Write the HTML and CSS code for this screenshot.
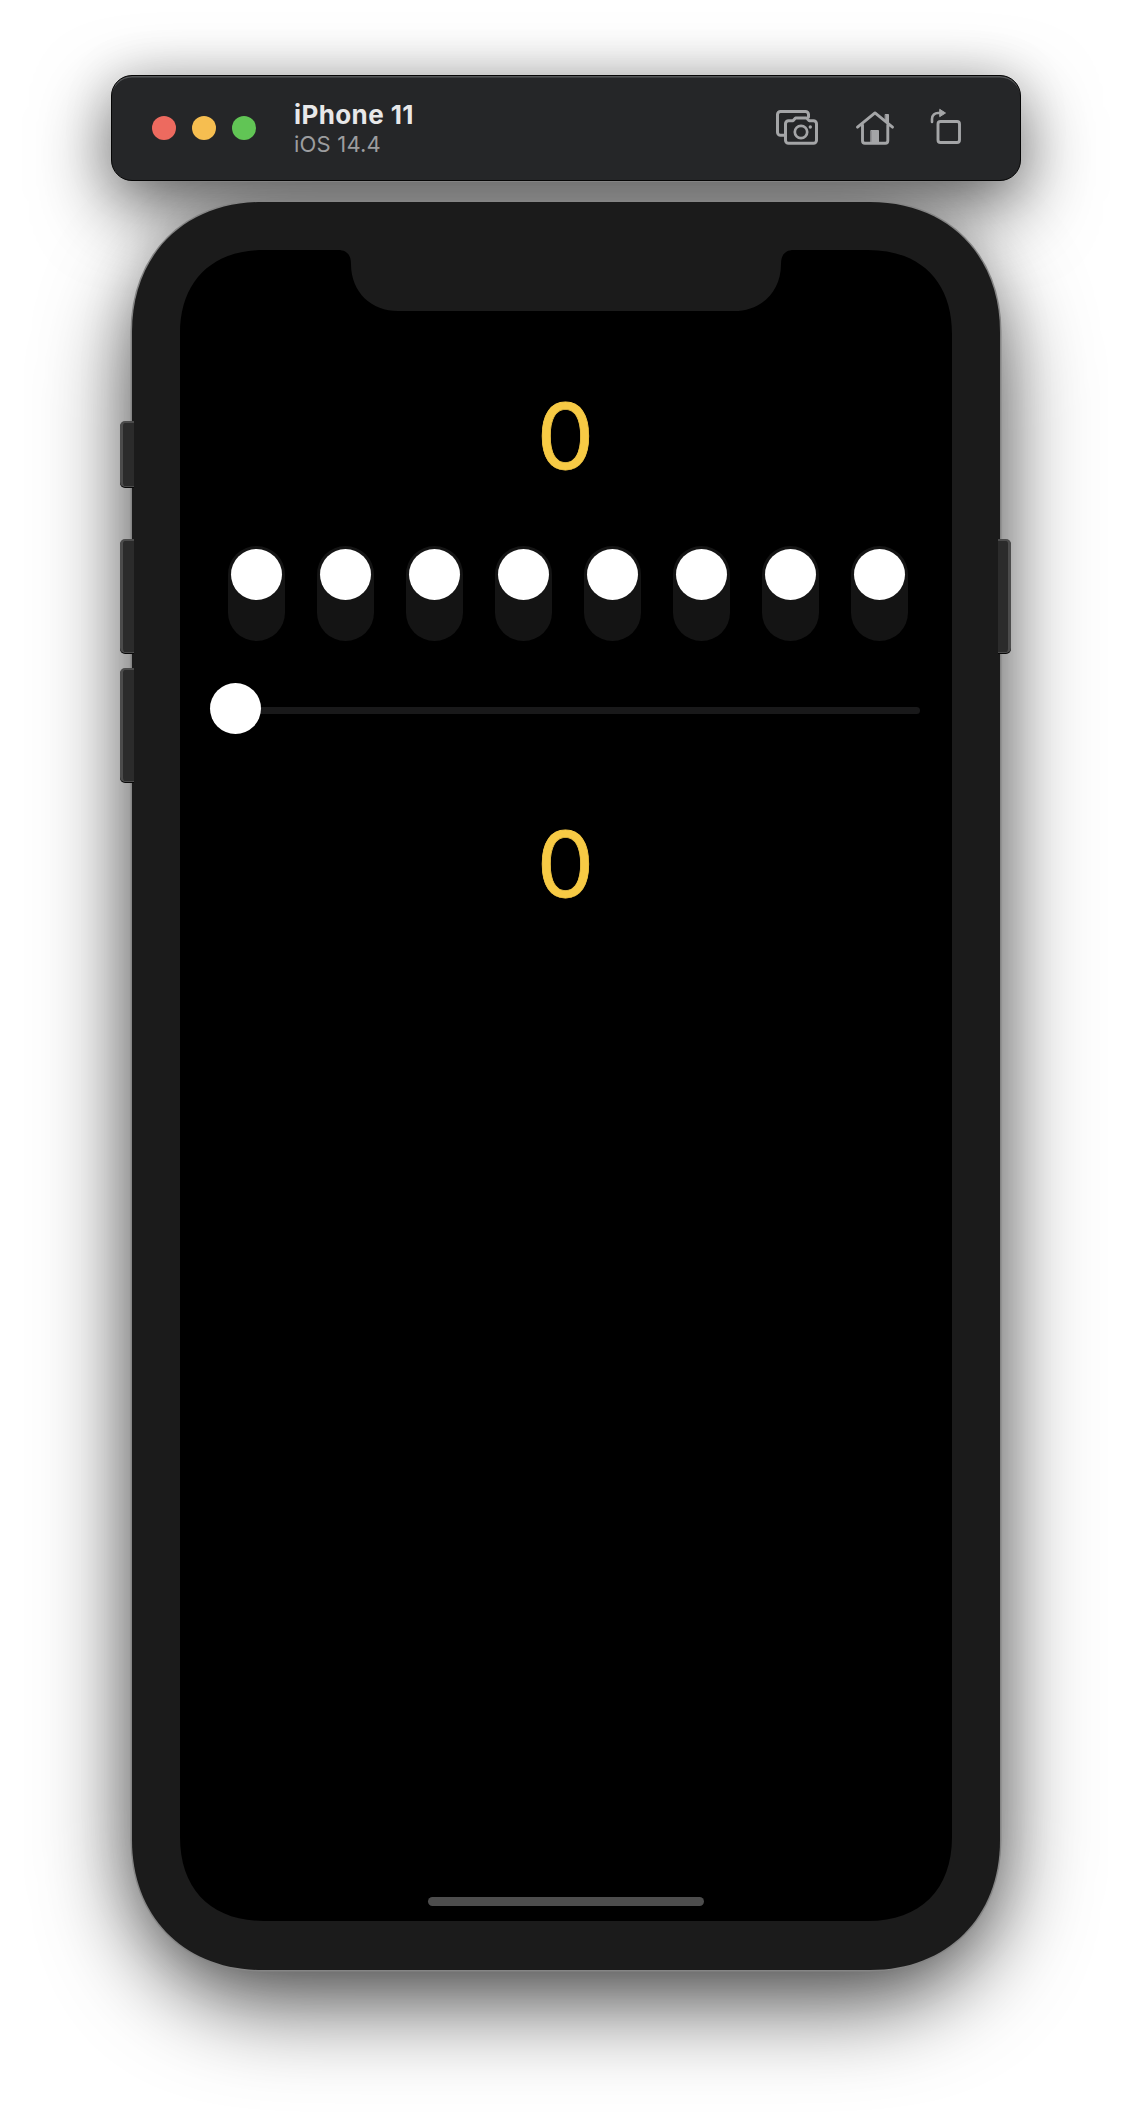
FILE: index.html
```
<!DOCTYPE html>
<html lang="en">
<head>
<meta charset="utf-8">
<title>iPhone 11</title>
<link rel="stylesheet" href="styles.css">
</head>
<body>
<header class="titlebar">
  <div class="lights"><i class="light red"></i><i class="light yellow"></i><i class="light green"></i></div>
  <div class="title"><h1>iPhone 11</h1><p>iOS 14.4</p></div>
  <svg class="tools" width="190" height="40" viewBox="0 0 190 40" fill="none" stroke="#a4a5a7" stroke-width="3" stroke-linejoin="round" stroke-linecap="round">
    <path d="M13 27.200H9.500a3 3 0 0 1-3-3V6.500a3 3 0 0 1 3-3h25a3 3 0 0 1 3 3V9"/>
    <path d="M14.500 15.700a3 3 0 0 1 3-3h4.500L24.500 10h11l2.700 2.700h4.300a3 3 0 0 1 3 3v16.500a3 3 0 0 1-3 3h-25a3 3 0 0 1-3-3z"/>
    <circle cx="30" cy="24" r="6.200" stroke-width="2.700"/><circle cx="39.300" cy="19" r="1.700" fill="#a4a5a7" stroke="none"/>
    <path d="M86.500 19.200L104 4.900l17.500 14.300M91.500 17v15.700a2.500 2.500 0 0 0 2.500 2.500h20.300a2.500 2.500 0 0 0 2.500-2.500V17" stroke-width="2.900"/>
    <path d="M114.500 6.500h3v9l-3-2.500zM100.200 22.500h7.300v13h-7.300z" fill="#a4a5a7" stroke-width="1"/>
    <rect x="167" y="13.500" width="21.500" height="21" rx="2.500" stroke-width="2.900"/>
    <path d="M161 14v-3c0-4 3-6 6-6h2" stroke-width="2.600"/><path d="M169 1.500l5.500 3.500-5.500 3.500z" fill="#a4a5a7" stroke-width="1"/>
  </svg>
</header>
<main class="phone">
  <i class="key mute"></i><i class="key up"></i><i class="key down"></i><i class="key power"></i>
  <svg class="shell" width="868" height="1768" viewBox="0 0 868 1768">
    <path class="case" d="M130 0H738C815.300 0 868 52.700 868 130V1638C868 1715.300 815.300 1768 738 1768H130C52.700 1768 0 1715.300 0 1638V130C0 52.700 52.700 0 130 0Z"/>
    <path d="M132 48H206C215 48 219 53 219 62C219 91 240 109 266 109H602C628 109 649 91 649 62C649 53 653 48 662 48H736C788.500 48 820 79.500 820 132V1635C820 1687.500 788.500 1719 736 1719H132C79.500 1719 48 1687.500 48 1635V132C48 79.500 79.500 48 132 48Z"/>
  </svg>
  <section class="screen">
    <output class="value">0</output>
    <div class="switches"><i class="switch"></i><i class="switch"></i><i class="switch"></i><i class="switch"></i><i class="switch"></i><i class="switch"></i><i class="switch"></i><i class="switch"></i></div>
    <div class="slider"><i class="thumb"></i></div>
    <output class="value second">0</output>
    <div class="home"></div>
  </section>
</main>
</body>
</html>
```
FILE: styles.css
```
* { box-sizing: border-box; }
body {
  margin: 0;
  height: 2120px;
  padding-top: 75px;
  display: flex;
  flex-direction: column;
  align-items: center;
  background: #fff;
  font-family: Inter, "Liberation Sans", sans-serif;
  overflow: hidden;
}
.titlebar {
  position: relative;
  z-index: 1;
  width: 910px;
  height: 106px;
  border: 1px solid #050505;
  border-radius: 21px;
  background: #252628;
  display: flex;
  align-items: center;
  padding: 0 59px 0 40px;
  box-shadow: inset 0 2px 0 -0.5px #545658, 0 26px 74px rgba(0,0,0,.6), 0 0 50px rgba(0,0,0,.14);
}
.lights { display: flex; gap: 16px; }
.light { width: 24px; height: 24px; border-radius: 50%; }
.red { background: #ed6a5f; }
.yellow { background: #f6be50; }
.green { background: #61c555; }
.title { margin: 2px 0 0 38px; }
h1 { margin: 0; font-size: 26px; line-height: 30px; font-weight: 700; color: #e8e8e9; letter-spacing: .4px; }
p { margin: 0; font-size: 22px; line-height: 28px; color: #9c9d9f; letter-spacing: .2px; }
.tools { margin-left: auto; }
.phone { position: relative; z-index: 2; width: 868px; height: 1768px; margin-top: 21px; }
.phone::before {
  content: "";
  position: absolute;
  inset: 0;
  border-radius: 140px;
  box-shadow: 0 34px 90px rgba(0,0,0,.68), 0 0 54px rgba(0,0,0,.16);
  clip-path: inset(-20px -132px -150px);
}
.shell { position: absolute; inset: 0; overflow: visible; }
.case { fill: #1b1b1b; stroke: #858585; stroke-width: 3px; paint-order: stroke; }
.key {
  position: absolute;
  z-index: 1;
  left: -12px;
  width: 14px;
  height: 114px;
  background: #2b2b2b;
  border: solid #4b4b4b;
  border-width: 2px 0 1px 3px;
  border-radius: 5px 0 0 5px;
  box-shadow: 0 1px #080808;
}
.mute { top: 219px; height: 66px; }
.up { top: 337px; }
.down { top: 466px; }
.power { left: 866px; width: 13px; top: 337px; border-width: 2px 3px 1px 0; border-radius: 0 5px 5px 0; }
.screen {
  position: relative;
  height: 1719px;
  padding: 179px 80px 15px;
  display: flex;
  flex-direction: column;
  align-items: center;
}
.value { font-size: 91px; line-height: 110px; color: #f7ca45; -webkit-text-stroke: .8px #f7ca45; margin-left: -1px; }
.switches { align-self: flex-start; width: 681px; margin: 55px 0 0 15.5px; display: flex; justify-content: space-between; }
.switch { width: 57.500px; height: 95px; padding: 3px; border-radius: 29px; background: #141414; }
.switch::before { content: ""; display: block; width: 51px; height: 51px; margin-left: .3px; border-radius: 50%; background: #fff; }
.slider { align-self: flex-start; width: 710px; height: 51px; margin: 42px 0 0 -2.3px; display: flex; align-items: center; }
.slider::after { content: ""; flex: 1; height: 7px; margin: 4px 0 0 -4px; background: #19191a; border-radius: 4px; }
.thumb { width: 51px; height: 51px; border-radius: 50%; background: #fff; z-index: 1; }
.second { margin-top: 75px; }
.home { margin-top: auto; width: 276px; height: 9px; border-radius: 5px; background: #4d4d4d; }
```
